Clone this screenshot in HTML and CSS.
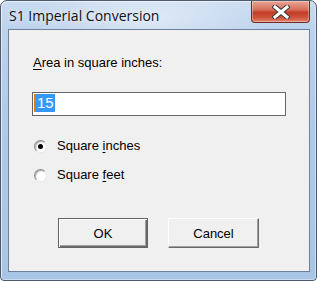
FILE: index.html
```html
<!DOCTYPE html>
<html lang="en">
<head>
  <meta charset="UTF-8">
  <title>S1 Imperial Conversion</title>
  <link rel="stylesheet" href="styles.css">
</head>
<body>
  <div class="window">
    <div class="titlebar">
      <span class="title">S1 Imperial Conversion</span>
      <button class="close" aria-label="Close">
        <svg width="18" height="14" viewBox="0 0 18 14">
          <path d="M3 2 L15 12 M15 2 L3 12" stroke="#3a3a3a" stroke-width="5" stroke-linecap="square"/>
          <path d="M3 2 L15 12 M15 2 L3 12" stroke="#fff" stroke-width="3" stroke-linecap="square"/>
        </svg>
      </button>
    </div>
    <div class="client">
      <label class="label" for="area"><u>A</u>rea in square inches:</label>
      <div class="field" id="area"><span class="sel">15</span></div>

      <div class="options">
        <div class="option"><span class="radio checked"></span><span>Square <u>i</u>nches</span></div>
        <div class="option"><span class="radio"></span><span>Square <u>f</u>eet</span></div>
      </div>

      <div class="buttons">
        <button class="btn default">OK</button>
        <button class="btn">Cancel</button>
      </div>
    </div>
  </div>
</body>
</html>
```

FILE: styles.css
```css
* { margin: 0; padding: 0; box-sizing: border-box; }
body {
  width: 317px;
  height: 281px;
  overflow: hidden;
  background: #fff;
}
.window {
  width: 317px;
  height: 281px;
  display: flex;
  flex-direction: column;
  border: 1px solid #4b5a6e;
  border-radius: 7px 7px 4px 4px;
  background:
    radial-gradient(ellipse 120px 40px at 150px 18px, rgba(255, 255, 255, 0.45), rgba(255, 255, 255, 0) 100%),
    linear-gradient(to bottom, #c9dbf0 0, #bdd3ed 28px, #b0cae9 120px, #a9c5e6 100%);
  box-shadow: inset 1px 1px 0 rgba(255, 255, 255, 0.6), inset -1px -1px 0 rgba(255, 255, 255, 0.4);
}
.titlebar {
  height: 28px;
  display: flex;
  justify-content: space-between;
  align-items: flex-start;
  padding-left: 8px;
}
.title {
  font-family: "Open Sans", "Noto Sans", sans-serif;
  font-size: 14px;
  line-height: 18px;
  margin-top: 6px;
  color: #111;
  text-shadow: 0 0 6px rgba(255, 255, 255, 0.9);
}
.close {
  width: 59px;
  height: 22px;
  margin-right: 6px;
  border: 1px solid #6e2a20;
  border-top: none;
  border-radius: 0 0 4px 4px;
  background: linear-gradient(to bottom, #e8a595 0, #d7725f 40%, #c33d27 55%, #d0553d 80%, #e0846a 100%);
  box-shadow: inset 0 0 0 1px rgba(255, 255, 255, 0.35);
  display: flex;
  align-items: center;
  justify-content: center;
}
.client {
  flex: 1;
  margin: 0 6px 8px 7px;
  border: 1px solid #6f819a;
  background: #f0f0f0;
  padding: 25px 0 0 23px;
  font-family: "Liberation Sans", Arial, sans-serif;
  font-size: 13px;
  color: #000;
}
.label {
  display: block;
  line-height: 15px;
  padding-left: 1px;
}
.field {
  margin-top: 22px;
  width: 254px;
  height: 24px;
  border: 1px solid #646464;
  background: #fff;
  padding: 1px 0 0 1px;
}
.sel {
  display: inline-block;
  height: 18px;
  line-height: 18px;
  padding: 0 1px 0 1px;
  font-size: 15px;
  color: #fff;
  background: #3399ff;
  border-left: 2px solid #e2781e;
}
.options {
  margin-top: 22px;
  display: flex;
  flex-direction: column;
  gap: 13px;
}
.option {
  display: flex;
  align-items: center;
  height: 16px;
  line-height: 16px;
  padding-left: 2px;
}
.radio {
  position: relative;
  width: 13px;
  height: 13px;
  margin-right: 10px;
  border-radius: 50%;
  border: 1px solid;
  border-color: #8a8a8a #e8e8e8 #e8e8e8 #8a8a8a;
  background: radial-gradient(circle at 60% 60%, #fff 0, #fff 50%, #e6e6e6 100%);
  box-shadow: inset 1px 1px 1px #b0b0b0;
}
.radio.checked::after {
  content: "";
  position: absolute;
  left: 3px;
  top: 3px;
  width: 5px;
  height: 5px;
  border-radius: 50%;
  background: #000;
}
.buttons {
  margin-top: 35px;
  padding-left: 26px;
  display: flex;
  gap: 20px;
}
.btn {
  width: 91px;
  height: 30px;
  font-family: "Liberation Sans", Arial, sans-serif;
  font-size: 13px;
  color: #000;
  background: #f0f0f0;
  border: 1px solid;
  border-color: #fff #696969 #696969 #fff;
  box-shadow: inset -1px -1px 0 #a0a0a0;
}
.btn.default {
  width: 90px;
  border: 1px solid #646464;
  box-shadow: inset 1px 1px 0 #fff, inset -1px -1px 0 #696969, inset -2px -2px 0 #a0a0a0;
}
u { text-decoration: underline; text-underline-offset: 2px; }
```
